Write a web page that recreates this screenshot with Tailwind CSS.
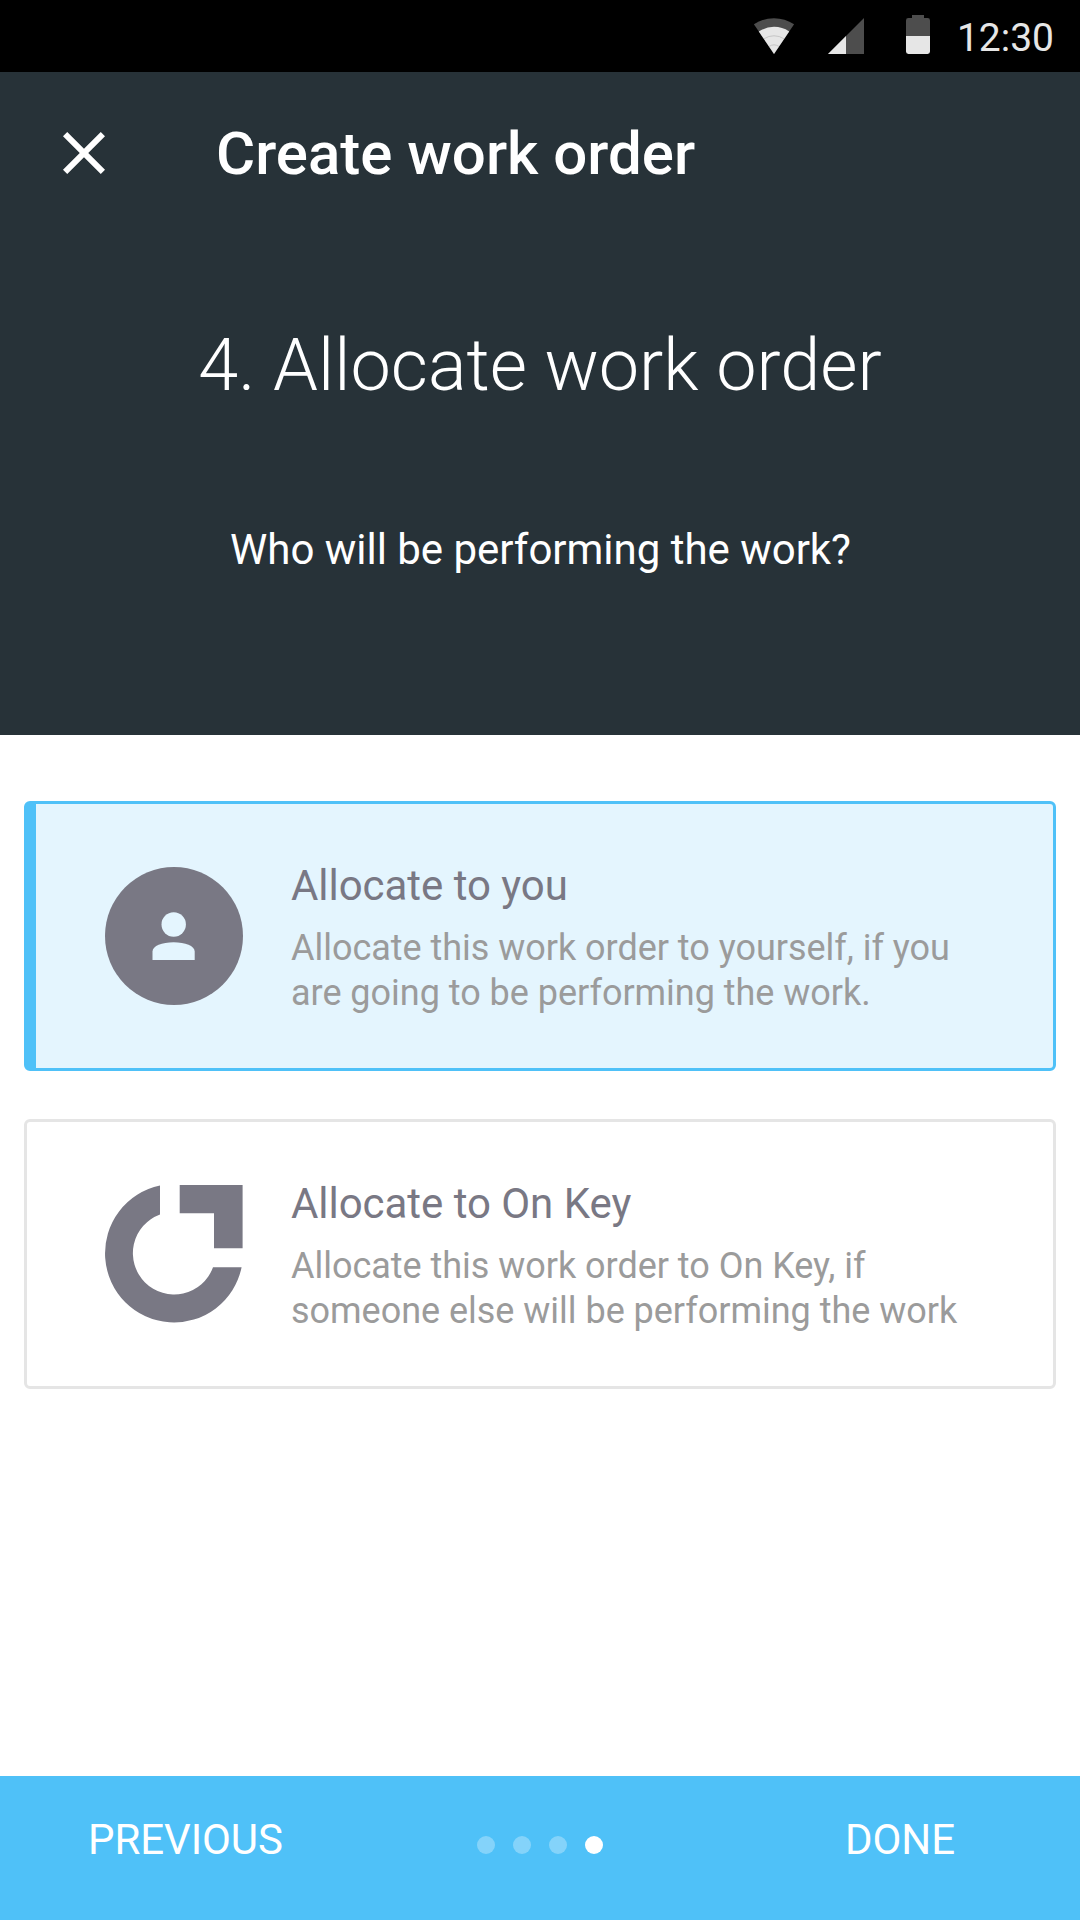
<!DOCTYPE html>
<html lang="en">
<head>
<meta charset="utf-8">
<title>Create work order</title>
<script src="https://cdn.jsdelivr.net/npm/@tailwindcss/browser@4"></script>
</head>
<body class="bg-white">
<div class="flex h-[1920px] w-[1080px] flex-col overflow-hidden bg-white font-['Roboto',sans-serif]">
  <!-- Status bar -->
  <div class="flex h-[72px] shrink-0 items-center justify-end bg-black pr-[26px]">
    <svg class="h-[72px] w-[204px]" viewBox="744 0 204 72">
      <path d="M774 54L753.9 24.3A36 36 0 0 1 794.1 24.3Z" fill="#4d4d4d"/>
      <path d="M774 54L758.8 31.5A27.2 27.2 0 0 1 789.2 31.5Z" fill="#e6e6e6"/>
      <path d="M764 38.8A18 18 0 0 1 784 38.8M769 46.5A9 9 0 0 1 779 46.5" fill="none" stroke="#bdbdbd" stroke-width=".8"/>
      <path d="M864 18V54H828Z" fill="#4d4d4d"/>
      <path d="M846 36V54H828Z" fill="#e6e6e6"/>
      <path d="M912 15h12v3h3.6a2.4 2.4 0 0 1 2.4 2.4V36H906V20.4a2.4 2.4 0 0 1 2.4-2.4H912Z" fill="#4d4d4d"/>
      <path d="M906 36h24v15.6a2.4 2.4 0 0 1-2.4 2.4h-19.2a2.4 2.4 0 0 1-2.4-2.4Z" fill="#e6e6e6"/>
    </svg>
    <span class="ml-[9px] pt-[3px] text-[39px] leading-[72px] text-[#e6e6e6]">12:30</span>
  </div>

  <header class="h-[663px] shrink-0 bg-[#273238] text-white">
    <div class="flex h-[162px] items-center gap-24 pl-12">
      <svg class="size-[72px]" viewBox="0 0 24 24" fill="#fff"><path d="M19 6.41L17.59 5 12 10.59 6.41 5 5 6.41 10.59 12 5 17.59 6.41 19 12 13.41 17.59 19 19 17.59 13.41 12z"/></svg>
      <h1 class="pt-[2px] text-[60px] leading-[72px] font-medium">Create work order</h1>
    </div>
    <h2 class="pt-[90px] text-center text-[72px] leading-[84px] font-light">4. Allocate work order</h2>
    <p class="pt-[112px] pl-px text-center text-[42px] leading-[60px] tracking-[-0.02px]">Who will be performing the work?</p>
  </header>

  <main class="flex grow flex-col gap-12 px-6 pt-[66px]">
    <section class="flex h-[270px] rounded-[6px] border-3 border-l-12 border-[#4fc1f8] bg-[#e4f5fe] pt-[63px] pl-[69px]">
      <svg class="size-[138px] shrink-0" viewBox="105 867 138 138">
        <circle cx="174" cy="936" r="69" fill="#797884"/>
        <circle cx="173.7" cy="924.5" r="12.2" fill="#e4f5fe"/>
        <path d="M152.5 960V951.5C152.5 946 162 942.3 173.6 942.3S194.7 946 194.7 951.5V960Z" fill="#e4f5fe"/>
      </svg>
      <div class="ml-12 whitespace-nowrap">
        <h3 class="-mt-2 text-[42px] leading-[54px] tracking-[-0.04px] text-[#797884]">Allocate to you</h3>
        <p class="mt-[13px] text-[36px] leading-[45px] tracking-[-0.025px] text-[#9b9b9b]">Allocate this work order to yourself, if you<br>are going to be performing the work.</p>
      </div>
    </section>
    <section class="flex h-[270px] rounded-[6px] border-3 border-[#e5e5e5] bg-white pt-[63px] pl-[78px]">
      <svg class="size-[138px] shrink-0" viewBox="0 0 138 138" fill="#797884">
        <path d="M55 .5V29.4A41.3 41.3 0 1 0 108 82.3H136.6A69 69.2 0 1 1 55 .5Z"/>
        <path d="M74.7 0H137.6V63.2H109V28.2H74.7Z"/>
      </svg>
      <div class="ml-12 whitespace-nowrap">
        <h3 class="-mt-2 text-[42px] leading-[54px] tracking-[-0.04px] text-[#797884]">Allocate to On Key</h3>
        <p class="mt-[13px] text-[36px] leading-[45px] tracking-[-0.025px] text-[#9b9b9b]">Allocate this work order to On Key, if<br>someone else will be performing the work</p>
      </div>
    </section>
  </main>

  <footer class="grid h-[144px] shrink-0 grid-cols-[1fr_auto_1fr] bg-[#4fc1f8] text-[42px] leading-[60px] tracking-[-0.08px] text-white">
    <span class="pt-[34px] pl-[88px]">PREVIOUS</span>
    <div class="flex gap-[18px] pt-[60px]">
      <i class="size-[18px] rounded-full bg-white/30"></i>
      <i class="size-[18px] rounded-full bg-white/30"></i>
      <i class="size-[18px] rounded-full bg-white/30"></i>
      <i class="size-[18px] rounded-full bg-white"></i>
    </div>
    <span class="pt-[34px] pr-[125px] text-right">DONE</span>
  </footer>
</div>
</body>
</html>
